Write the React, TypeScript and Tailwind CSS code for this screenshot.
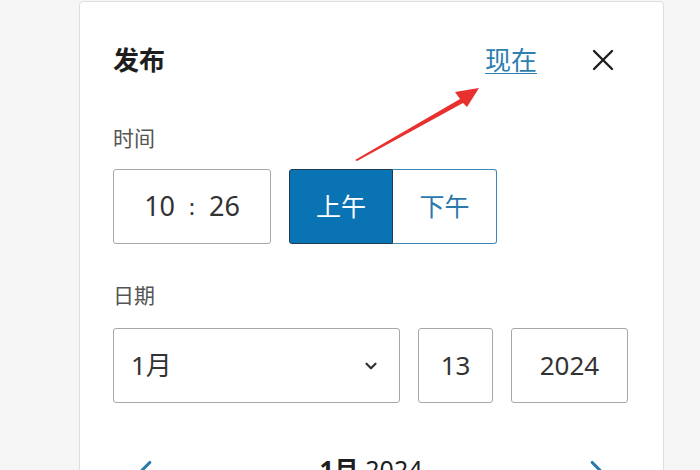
import { X, ChevronDown, ChevronLeft, ChevronRight } from "lucide-react"

const font = { fontFamily: '"Noto Sans", "Noto Sans CJK SC", sans-serif' }

function Arrow() {
  // red annotation arrow pointing at the "现在" link
  return (
    <svg className="pointer-events-none absolute left-0 top-0" width="700" height="470">
      <polygon
        points="355,160 460,99 455,92 479,88 467,107 463,103 357,161"
        fill="#e8302f"
      />
    </svg>
  )
}

export default function App() {
  return (
    <div className="relative h-[470px] w-[700px] overflow-hidden bg-[#f6f6f6]" style={font}>
      <div className="ml-[79px] mt-[1px] h-[520px] w-[585px] rounded-[4px] border border-[#dedede] bg-white pl-[33px] pr-[34px] pt-[40px]">
        {/* header */}
        <div className="flex h-[36px] items-center">
          <h2 className="text-[26px] font-bold leading-[36px] text-[#1e1e1e]">发布</h2>
          <a className="ml-auto text-[26px] leading-[36px] text-[#2f7fb0] underline underline-offset-[3px] decoration-1">
            现在
          </a>
          <button className="ml-[48px] mr-[8px] flex h-[36px] w-[36px] items-center justify-center text-[#1e1e1e]">
            <X className="h-[38px] w-[38px]" strokeWidth={1.6} />
          </button>
        </div>

        {/* time */}
        <div className="mt-[46px] text-[21px] leading-[28px] text-[#555]">时间</div>
        <div className="mt-[17px] flex h-[75px] items-stretch">
          <div className="flex w-[158px] shrink-0 items-center justify-center gap-[14px] rounded-[3px] border border-[#a7a7a7] text-[27px] text-[#333]">
            <span>10</span>
            <span className="text-[22px]">:</span>
            <span>26</span>
          </div>
          <div className="ml-[18px] flex">
            <button className="w-[104px] rounded-l-[3px] border border-[#1d3c54] bg-[#0a73b4] text-[25px] text-white">
              上午
            </button>
            <button className="w-[104px] rounded-r-[3px] border border-l-0 border-[#3b88b8] bg-white text-[25px] text-[#2b78ab]">
              下午
            </button>
          </div>
        </div>

        {/* date */}
        <div className="mt-[37px] text-[21px] leading-[28px] text-[#555]">日期</div>
        <div className="mt-[19px] flex h-[75px] gap-[18px]">
          <div className="flex w-[287px] shrink-0 items-center rounded-[3px] border border-[#a7a7a7] pl-[17px] pr-[19px] text-[26px] text-[#333]">
            <span>1月</span>
            <ChevronDown className="ml-auto h-[18px] w-[18px]" strokeWidth={3} />
          </div>
          <div className="flex w-[75px] shrink-0 items-center justify-center rounded-[3px] border border-[#a7a7a7] text-[26px] text-[#333]">
            13
          </div>
          <div className="flex w-[117px] shrink-0 items-center justify-center rounded-[3px] border border-[#a7a7a7] text-[26px] text-[#333]">
            2024
          </div>
        </div>

        {/* calendar header */}
        <div className="mt-[47px] flex h-[40px] items-center pl-[18px] pr-[18px]">
          <ChevronLeft className="h-[30px] w-[30px] text-[#2b78ab]" strokeWidth={2.5} />
          <div className="mx-auto text-[25px] text-[#1e1e1e]">
            <span className="font-bold">1月</span> <span>2024</span>
          </div>
          <ChevronRight className="h-[30px] w-[30px] text-[#2b78ab]" strokeWidth={2.5} />
        </div>
      </div>
      <Arrow />
    </div>
  )
}
